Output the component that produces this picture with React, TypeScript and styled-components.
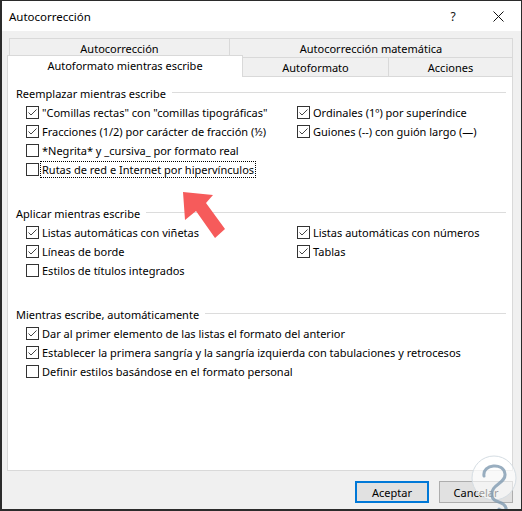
import React from 'react';
import styled, { createGlobalStyle } from 'styled-components';

const Global = createGlobalStyle`
  html, body { margin: 0; padding: 0; background: #ffffff; }
  body { font-family: "Noto Sans", "Open Sans", sans-serif; font-size: 11px; color: #000; }
  * { box-sizing: border-box; }
`;

const Window = styled.div`
  position: relative;
  width: 522px;
  height: 511px;
  border: 1px solid #2b2b2b;
  border-left-width: 2px;
  border-bottom-width: 2px;
  background: #f0f0f0;
  display: flex;
  flex-direction: column;
  overflow: hidden;
`;

const TitleBar = styled.div`
  height: 30px;
  background: #ffffff;
  display: flex;
  align-items: center;
  padding-left: 7px;
  flex-shrink: 0;
`;

const Title = styled.div`
  flex: 1;
  font-size: 11.5px;
  line-height: 14px;
  padding-top: 1px;
`;

const TitleButton = styled.div<{ $w: number }>`
  width: ${(p) => p.$w}px;
  height: 30px;
  display: flex;
  align-items: center;
  justify-content: center;
  font-size: 12px;
  color: #111;
`;

const Body = styled.div`
  flex: 1;
  padding: 7px 8px 0 5px;
  display: flex;
  flex-direction: column;
`;

const TabRow = styled.div<{ $indent: number }>`
  display: flex;
  align-items: flex-start;
  height: 19px;
  margin-left: ${(p) => p.$indent}px;
`;

const Tab = styled.div<{ $w?: number; $active?: boolean; $first?: boolean }>`
  position: relative;
  ${(p) => (p.$w ? `width: ${p.$w}px; flex-shrink: 0;` : 'flex: 1;')}
  height: ${(p) => (p.$active ? 22 : 19)}px;
  margin-top: ${(p) => (p.$active ? -2 : 0)}px;
  margin-left: ${(p) => (p.$first ? 0 : -1)}px;
  border: 1px solid #d9d9d9;
  border-bottom: none;
  background: ${(p) => (p.$active ? '#ffffff' : '#f0f0f0')};
  z-index: ${(p) => (p.$active ? 2 : 1)};
  display: flex;
  align-items: center;
  justify-content: center;
  padding-bottom: ${(p) => (p.$active ? 2 : 0)}px;
  white-space: nowrap;
`;

const Panel = styled.div`
  height: 395px;
  background: #ffffff;
  border: 1px solid #d9d9d9;
  padding: 6px 6px 0 8px;
  display: flex;
  flex-direction: column;
  gap: 24px;
`;

const Section = styled.div`
  display: flex;
  flex-direction: column;
`;

const Header = styled.div`
  height: 20px;
  display: flex;
  align-items: center;
  gap: 6px;
  white-space: nowrap;
  &::after {
    content: '';
    flex: 1;
    height: 1px;
    background: #dcdcdc;
    margin-top: -1px;
  }
`;

const Grid = styled.div<{ $cols: string }>`
  display: grid;
  grid-template-columns: ${(p) => p.$cols};
  grid-auto-rows: 19px;
  padding-left: 10px;
`;

const Row = styled.div`
  display: flex;
  align-items: center;
  height: 19px;
  white-space: nowrap;
`;

const Box = styled.div`
  width: 13px;
  height: 13px;
  border: 1px solid #333333;
  background: #ffffff;
  flex-shrink: 0;
  display: flex;
  align-items: center;
  justify-content: center;
`;

const Label = styled.span<{ $focus?: boolean }>`
  margin-left: 1px;
  padding: 0 1px;
  line-height: 15px;
  border: 1px dotted ${(p) => (p.$focus ? '#000' : 'transparent')};
`;

const Footer = styled.div`
  display: flex;
  justify-content: flex-end;
  gap: 10px;
  margin-top: 10px;
`;

const Button = styled.div<{ $primary?: boolean }>`
  width: 74px;
  height: 22px;
  display: flex;
  align-items: center;
  justify-content: center;
  background: #e1e1e1;
  border: ${(p) => (p.$primary ? '2px solid #0078d7' : '1px solid #adadad')};
`;

const Overlay = styled.svg<{ $x: number; $y: number }>`
  position: absolute;
  left: ${(p) => p.$x}px;
  top: ${(p) => p.$y}px;
  pointer-events: none;
  z-index: 5;
`;

type Item = { text: string; checked: boolean; focus?: boolean } | null;

const Check = ({ item }: { item: Item }) => {
  if (!item) return <div />;
  return (
    <Row>
      <Box>
        {item.checked && (
          <svg width="11" height="11" viewBox="0 0 11 11">
            <path d="M1.5 5.5 L4 8 L9.5 2.5" fill="none" stroke="#444" strokeWidth="1" />
          </svg>
        )}
      </Box>
      <Label $focus={item.focus}>{item.text}</Label>
    </Row>
  );
};

const sec1: Item[] = [
  { text: '"Comillas rectas" con "comillas tipográficas"', checked: true },
  { text: 'Ordinales (1º) por superíndice', checked: true },
  { text: 'Fracciones (1/2) por carácter de fracción (½)', checked: true },
  { text: 'Guiones (--) con guión largo (—)', checked: true },
  { text: '*Negrita* y _cursiva_ por formato real', checked: false },
  null,
  { text: 'Rutas de red e Internet por hipervínculos', checked: false, focus: true },
  null,
];

const sec2: Item[] = [
  { text: 'Listas automáticas con viñetas', checked: true },
  { text: 'Listas automáticas con números', checked: true },
  { text: 'Líneas de borde', checked: true },
  { text: 'Tablas', checked: true },
  { text: 'Estilos de títulos integrados', checked: false },
  null,
];

const sec3: Item[] = [
  { text: 'Dar al primer elemento de las listas el formato del anterior', checked: true },
  { text: 'Establecer la primera sangría y la sangría izquierda con tabulaciones y retrocesos', checked: true },
  { text: 'Definir estilos basándose en el formato personal', checked: false },
];

export default function App() {
  return (
    <>
      <Global />
      <Window>
        <TitleBar>
          <Title>Autocorrección</Title>
          <TitleButton $w={44}>?</TitleButton>
          <TitleButton $w={46}>
            <svg width="11" height="11" viewBox="0 0 11 11">
              <path d="M0.5 0.5 L10.5 10.5 M10.5 0.5 L0.5 10.5" stroke="#111" strokeWidth="1" />
            </svg>
          </TitleButton>
        </TitleBar>
        <Body>
          <TabRow $indent={2}>
            <Tab $w={221} $first>Autocorrección</Tab>
            <Tab>Autocorrección matemática</Tab>
          </TabRow>
          <TabRow $indent={0}>
            <Tab $w={236} $first $active>Autoformato mientras escribe</Tab>
            <Tab $w={147}>Autoformato</Tab>
            <Tab>Acciones</Tab>
          </TabRow>
          <Panel>
            <Section>
              <Header>Reemplazar mientras escribe</Header>
              <Grid $cols="271px 1fr">
                {sec1.map((it, i) => (
                  <Check key={i} item={it} />
                ))}
              </Grid>
            </Section>
            <Section>
              <Header>Aplicar mientras escribe</Header>
              <Grid $cols="271px 1fr">
                {sec2.map((it, i) => (
                  <Check key={i} item={it} />
                ))}
              </Grid>
            </Section>
            <Section>
              <Header>Mientras escribe, automáticamente</Header>
              <Grid $cols="1fr">
                {sec3.map((it, i) => (
                  <Check key={i} item={it} />
                ))}
              </Grid>
            </Section>
          </Panel>
          <Footer>
            <Button $primary>Aceptar</Button>
            <Button>Cancelar</Button>
          </Footer>
        </Body>
        <Overlay $x={170} $y={182} width="62" height="64" viewBox="0 0 62 64">
          <polygon
            points="11,9 41,12 34,20 53,46 43,55 24,28 13,37"
            fill="#f65b5b"
          />
        </Overlay>
        <Overlay $x={466} $y={453} width="56" height="58" viewBox="0 0 56 58">
          <circle cx="26" cy="24" r="22" fill="#ffffff" fillOpacity="0.6" stroke="#d5dde3" strokeWidth="1" />
          <path
            d="M16 22 C14 10 36 8 37 20 C38 30 22 30 24 42 C25 50 36 46 38 54 C39 57 33 57 31 55"
            fill="none"
            stroke="#7f9ab0"
            strokeOpacity="0.8"
            strokeWidth="3"
            strokeLinecap="round"
          />
        </Overlay>
      </Window>
    </>
  );
}
